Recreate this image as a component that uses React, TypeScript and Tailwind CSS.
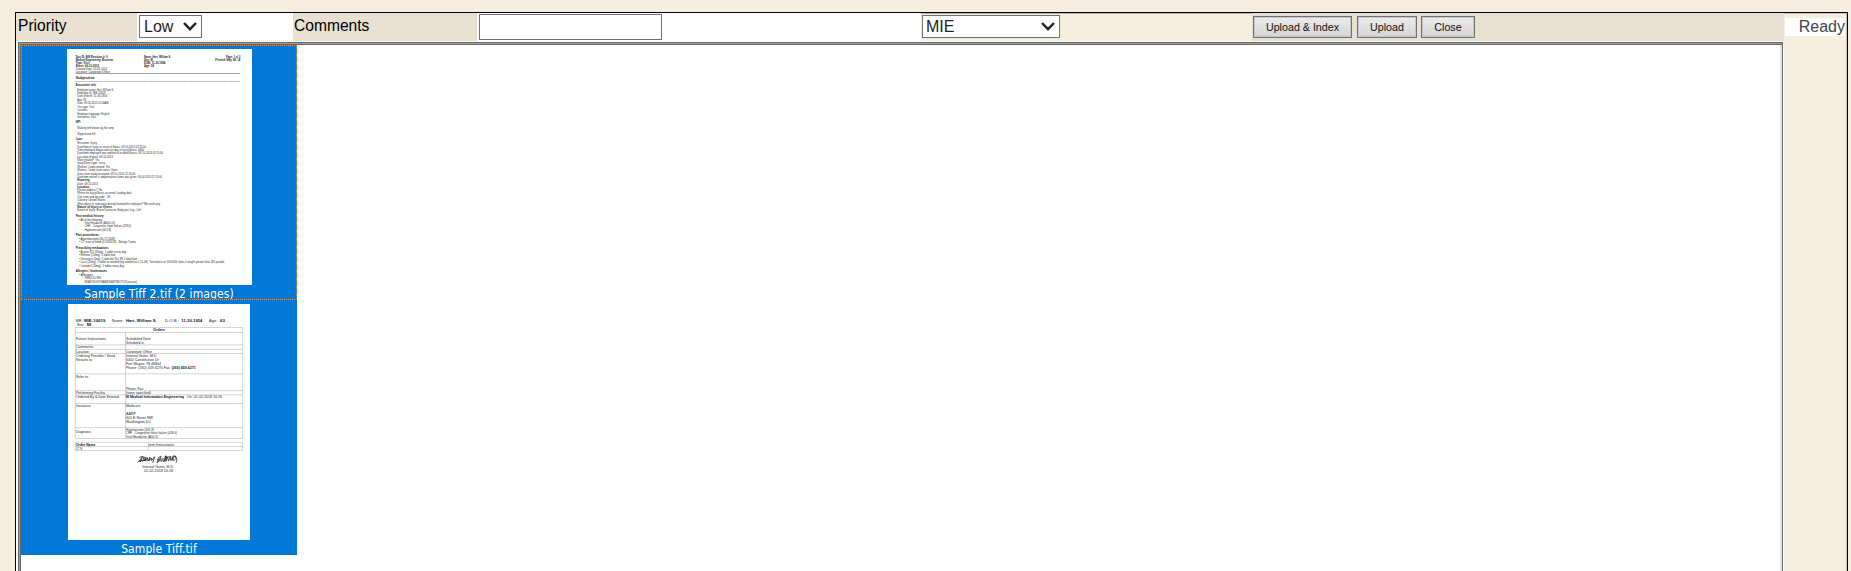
import React from "react";

type Line = [x: number, end: number, y: number, text: string, bold?: boolean];

const visitNote: Line[] = [
  [197, 293, 51, "Doc ID: 868 Revision #: 0", true],
  [197, 309, 60, "Medical Engineering, Bruselee", true],
  [197, 238, 69, "Type: Visit", true],
  [197, 267, 78, "Event: 09-10-2013", true],
  [197, 291, 87, "Created Date: 02-03-2014"],
  [197, 300, 95, "Location: Corporate Office"],
  [402, 483, 51, "Name: Hart, William S.", true],
  [402, 428, 60, "Sex: M", true],
  [402, 466, 69, "DOB: 11-30-1954", true],
  [402, 432, 78, "Age: 59", true],
  [648, 691, 51, "Page: 1 of 2", true],
  [616, 691, 60, "Printed: May 08, 14", true],
  [197, 254, 115, "Subjective", true],
  [197, 258, 136, "Encounter info", true],
  [202, 312, 149, "Employee name: Hart, William S."],
  [202, 286, 159, "Employee ID: MIE-10019"],
  [202, 292, 169, "Date of birth: 11-30-1954"],
  [202, 228, 180, "Age: 59"],
  [202, 295, 190, "Date: 09-10-2013 12:00AM"],
  [202, 253, 200, "Visit type: Visit"],
  [202, 233, 210, "Location:"],
  [202, 299, 221, "Employee language: English"],
  [202, 258, 231, "Interpreter: Visit"],
  [197, 211, 247, "HPI", true],
  [202, 312, 265, "Walking with brown lug the ramp"],
  [202, 256, 281, "Slipped and fell"],
  [197, 217, 297, "Cause", true],
  [202, 261, 310, "Encounter: Injury"],
  [202, 408, 320, "Date/time of injury or onset of illness: 09-10-2013 02:12:00"],
  [202, 402, 330, "Time employee began work on day of injury/illness: 0600"],
  [202, 459, 340, "Date/time employee was notified of incident/illness: 09-10-2013 02:15:00"],
  [202, 309, 350, "Last date of work: 09-10-2013"],
  [202, 269, 360, "Work related?: Yes"],
  [202, 285, 370, "Injury/Illness type: Injury"],
  [202, 300, 380, "Workers' Comp related: Yes"],
  [202, 322, 391, "Workers' Comp claim status: Open"],
  [202, 376, 401, "Date claim ready/accepted: 09-10-2014 22:15:00"],
  [202, 456, 411, "Date/time worker's compensation claims was given: 09-10-2013 22:15:00"],
  [202, 239, 421, "Reporting", true],
  [202, 264, 431, "Date: 09-10-2013"],
  [202, 238, 441, "Location", true],
  [202, 277, 451, "Private address?: No"],
  [202, 365, 460, "Where the Injury/Illness occurred: Loading dock"],
  [202, 300, 471, "City, state and zip code: , IN"],
  [202, 286, 481, "Country: United States"],
  [202, 450, 491, "What object or substance directly harmed the employee? Wet and rainy"],
  [202, 306, 501, "Nature of Injury or Illness", true],
  [202, 393, 511, "Nature of Injury: Bruise/Contusion; Body part: Leg - Left"],
  [197, 281, 529, "Past medical history", true],
  [207, 276, 540, "•  All of the following"],
  [219, 315, 549, "◦  Viral Headache (A000.V4)"],
  [219, 363, 559, "◦  CHF - Congestive heart failure (428.0)"],
  [219, 303, 569, "◦  Hypertension (401.9)"],
  [197, 267, 586, "Past procedures", true],
  [207, 315, 598, "•  Appendectomy (06-17-2008)"],
  [207, 378, 607, "•  CT scan of head (2/13/2013) - Benign Tumor"],
  [197, 296, 625, "Prescribing medications", true],
  [207, 348, 636, "•  Aspirin 325 (81mg): 1 tablet every day"],
  [207, 315, 646, "•  Enteron (10mg): 1 tablet bid"],
  [207, 381, 656, "•  Glucovance (5mg): 1 tablet bid, Pat. HS 1 tablet 6am"],
  [207, 643, 667, "•  Lasix (20mg): 1 tablet as needed (leg swelled on 5-15-08): Twice/once on 10/14/06; takes if weight greater than 185 pounds"],
  [207, 342, 677, "•  Lisinopril (10mg): 1 tablet every day"],
  [197, 291, 694, "Allergies / Intolerances", true],
  [207, 249, 706, "•  Allergies"],
  [219, 273, 715, "◦  PENICILLINS"],
  [219, 381, 725, "◦  NSAID/SULFONAMIDE ANTIBIOTICS (nausea)"],
];

const orderForm: Line[] = [
  [430, 465, 104, "Orders", true],
  [198, 288, 130, "Future Instructions"],
  [348, 424, 130, "Scheduled Date:"],
  [348, 404, 142, "Scheduled in:"],
  [198, 250, 156, "Comments"],
  [198, 237, 170, "Location"],
  [348, 426, 170, "Corporate Office"],
  [198, 315, 182, "Ordering Provider / Send"],
  [198, 246, 194, "Results to"],
  [348, 442, 182, "Internal Guiter, M.D."],
  [348, 446, 194, "6302 Constitution Dr"],
  [348, 453, 206, "Fort Wayne, IN 46804"],
  [348, 482, 218, "Phone: (260) 459-6270 Fax:"],
  [485, 557, 218, "(260) 459-6271", true],
  [198, 236, 244, "Refer to:"],
  [348, 402, 280, "Phone: Fax:"],
  [198, 285, 293, "Performing Facility"],
  [348, 423, 293, "(none specified)"],
  [198, 327, 306, "Ordered By & Date Entered"],
  [348, 522, 306, "M Medical Informatics Engineering", true],
  [531, 636, 306, "On: 01-02-2018 10:26"],
  [198, 243, 332, "Insurance"],
  [348, 391, 332, "Medicare"],
  [348, 378, 356, "AARP"],
  [348, 429, 368, "601 E Street NW"],
  [348, 423, 380, "Washington DC"],
  [198, 243, 409, "Diagnosis"],
  [348, 432, 404, "Hypertension (401.9)"],
  [348, 501, 414, "CHF - Congestive heart failure (428.0)"],
  [348, 444, 424, "Viral Headache (A00.V)"],
  [198, 256, 448, "Order Name", true],
  [414, 492, 448, "Item Instructions"],
  [198, 216, 461, "CT N"],
  [397, 492, 515, "Internal Guiter, M.D."],
  [402, 489, 527, "01-02-2018 10:28"],
];

const patient: Line[] = [
  [197, 218, 76, "MR:"],
  [222, 286, 76, "MIE-10019", true],
  [305, 340, 76, "Name:"],
  [348, 440, 76, "Hart, William S.", true],
  [465, 507, 76, "D.O.B.:"],
  [514, 577, 76, "11-30-1954", true],
  [597, 622, 76, "Age:"],
  [630, 645, 76, "63", true],
  [200, 223, 89, "Sex:"],
  [230, 243, 89, "M", true],
];

function Lines({ items, size }: { items: Line[]; size: number }) {
  return (
    <>
      {items.map(([x, end, y, text, bold], i) => (
        <text
          key={i}
          x={x}
          y={y + size * 0.34}
          fontSize={size}
          fontWeight={bold ? 700 : 400}
          fill={bold ? "#111" : "#1c1c1c"}
          textLength={end - x}
          lengthAdjust="spacingAndGlyphs"
        >
          {text}
        </text>
      ))}
    </>
  );
}

function VisitNotePage() {
  return (
    <svg className="block shrink-0 bg-white font-['Liberation_Sans',sans-serif]" width="185" height="236" viewBox="171 27 555 708">
      <Lines items={visitNote} size={9.8} />
      <path d="M197 100.500H691" stroke="#777" strokeWidth="2" />
      <path d="M197 124.500H691" stroke="#888" strokeWidth="2" strokeDasharray="4 1" />
    </svg>
  );
}

function OrderFormPage() {
  return (
    <svg className="block shrink-0 bg-white font-['Liberation_Sans',sans-serif]" width="182" height="236" viewBox="174 27 546 708">
      <Lines items={patient} size={13} />
      <Lines items={orderForm} size={11.5} />
      <g fill="none" stroke="#999" strokeWidth="1.500" strokeDasharray="5 1">
        <path d="M196 97.500H698V430.500H196ZM196 112.500H698M196 149.500H698M196 163H698M196 175.500H698M196 236.500H698M196 287H698M196 299.500H698M196 325.500H698M196 398H698M346.500 112V430" />
        <path d="M196 442H698V466.500H196ZM196 454.500H698M414.500 454V466" />
      </g>
      <path
        d="M382 503l9-9 6-9-7 16 5-7 3 5 4-14 1 13 5-12-1 12 5-10 2 10 6-12-2 11 6-8 1 8 9-12-6 19M388 487l12-3M441 503l5-16 7-3-4 9-6 9 10-8 1 6 5-6 2 6 6-18-3 17 6-15-2 15 5-12 3 11 5-13 1 11 7-12-3 13 8-15 4 8-6 7-5-8M489 483l9 2 3 10-3 8M385 499l22-4M441 494l20-3M466 487l18-2"
        fill="none"
        stroke="#2a2a2a"
        strokeWidth="2.300"
      />
    </svg>
  );
}

function Select({ value, className }: { value: string; className: string }) {
  return (
    <button className={`flex h-[23px] items-center justify-between border border-[#707070] bg-white pr-[4px] text-[#222] ${className}`}>
      <span className="leading-[21px]">{value}</span>
      <svg width="14" height="11" viewBox="0 0 14 11" fill="none" stroke="#222" strokeWidth="2.500">
        <path d="M1 2 7 8.200 13 2" />
      </svg>
    </button>
  );
}

function ActionButton({ label, className }: { label: string; className: string }) {
  return (
    <button
      className={`h-[22px] border border-[#707070] bg-linear-to-b from-[#ececec] to-[#d4d4d4] text-center text-[10.7px] leading-[18px] text-[#111] shadow-[inset_0_0_0_1px_#c4c6ca] ${className}`}
    >
      {label}
    </button>
  );
}

function Toolbar() {
  return (
    <div className="flex h-[28px] text-[16px] leading-[26px] text-black">
      <div className="w-[121px] bg-[#e8e1d1] pl-[2px]">
        <span className="inline-block origin-left scale-x-[0.975]">Priority</span>
      </div>
      <div className="flex w-[156px] pl-[2px] pt-[2px]">
        <Select value="Low" className="w-[63px] pl-[4px]" />
      </div>
      <div className="w-[184px] bg-[#e8e1d1] pl-px">
        <span className="inline-block origin-left scale-x-[0.975]">Comments</span>
      </div>
      <div className="flex w-[444px] pl-[2px] pt-px">
        <input aria-label="Comments" className="h-[26px] w-[183px] border border-[#707070] bg-white px-1 outline-none" />
      </div>
      <div className="flex w-[331px] border-t border-[#b9b4aa] bg-[#f5eddd] pl-px pt-px">
        <Select value="MIE" className="w-[138px] pl-[3px]" />
      </div>
      <div className="flex w-[532px] bg-[#e8e1d1] pl-px pt-[3px]">
        <ActionButton label="Upload & Index" className="w-[99px]" />
        <ActionButton label="Upload" className="ml-[5px] w-[60px]" />
        <ActionButton label="Close" className="ml-[4px] w-[54px]" />
      </div>
    </div>
  );
}

export default function App() {
  return (
    <div className="h-[571px] w-[1851px] overflow-hidden bg-[#f5eddd] pl-[15px] pt-[12px] font-['Liberation_Sans',Arial,sans-serif]">
      <div className="flex h-[600px] w-[1833px] border border-black">
        <div className="w-[1768px] shrink-0 bg-white">
          <Toolbar />
          <div className="ml-[2px] mt-px flex h-[570px] w-[1765px] flex-col border-b border-l-[3px] border-r border-t-[3px] border-double border-[#666] bg-[#a0a0a0]">
            <div className="h-full w-full border-r-2 border-[#e3e3e3] bg-white">
              <div className="w-[276px] bg-[#0078d7] font-['DejaVu_Sans_Condensed','DejaVu_Sans',sans-serif] text-[12px] tracking-[0.09px] text-white">
                <div className="flex h-[255px] flex-col items-center overflow-hidden border border-dotted border-[#ff8a28] pt-[3px]">
                  <VisitNotePage />
                  <span className="h-[15px] whitespace-nowrap leading-[18px]">Sample Tiff 2.tif (2 images)</span>
                </div>
                <div className="flex h-[255px] flex-col items-center overflow-hidden pt-[4px]">
                  <OrderFormPage />
                  <span className="h-[15px] whitespace-nowrap leading-[18px]">Sample Tiff.tif</span>
                </div>
              </div>
            </div>
          </div>
        </div>
        <div className="grow border-r border-t border-[#c9c3b8] pl-px pr-px pt-[4px]">
          <div className="h-[18px] bg-white text-right text-[16px] leading-[17px] text-[#444]">
            <span className="inline-block">Ready</span>
          </div>
        </div>
      </div>
    </div>
  );
}
